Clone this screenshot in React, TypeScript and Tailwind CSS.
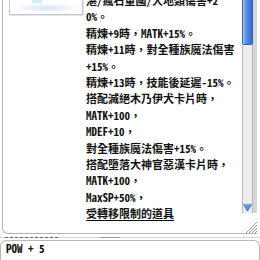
const lines: string[] = [
  "湛/瘋石量國/大地類傷害+2",
  "0%。",
  "精煉+9時，MATK+15%。",
  "精煉+11時，對全種族魔法傷害",
  "+15%。",
  "精煉+13時，技能後延遲-15%。",
  "搭配滅絕木乃伊犬卡片時，",
  "MATK+100，",
  "MDEF+10，",
  "對全種族魔法傷害+15%。",
  "搭配墮落大神官惡漢卡片時，",
  "MATK+100，",
  "MaxSP+50%，",
];

const font = {
  fontFamily: '"Noto Sans Mono CJK TC", "Noto Sans CJK TC", "Liberation Mono", monospace',
};

export default function App() {
  return (
    <div className="w-[260px] h-[260px] bg-white overflow-hidden text-[#111]" style={font}>
      <div className="h-[234px] flex ml-[2px] mr-[3px] border-l border-b border-[#b4b4b4] rounded-bl-[6px] overflow-hidden relative">
        <div className="w-[83px] shrink-0 pl-[6px]">
          <div className="w-[74px] h-[15px] border border-t-0 border-[#c2c6d2] bg-white relative overflow-hidden shadow-[1px_1px_0_#e6e6e6]">
            <div className="absolute left-[8px] right-[6px] top-[4px] h-[8px] bg-[radial-gradient(ellipse_at_center,#dde4fa_0%,#eef1fc_50%,transparent_75%)]" />
            <div className="absolute left-[22px] top-0 w-[10px] h-[3px] bg-[#cfeff5]" />
          </div>
        </div>
        <div className="flex-1 min-w-0 -mt-[8px] text-[11px] leading-[16.4px] font-bold whitespace-nowrap overflow-hidden">
          {lines.map((l, i) => (
            <div key={i}>{l}</div>
          ))}
          <div className="underline underline-offset-[2px]">受轉移限制的道具</div>
        </div>
        <div className="w-[15px] shrink-0 flex">
          <div className="w-[11px] flex flex-col">
            <div className="h-[45px] rounded-b-[2px] border border-t-0 border-[#2f62b8] bg-[linear-gradient(90deg,#a8c6f2_0%,#5b8fe0_35%,#3f76d2_80%,#3568c0_100%)]" />
            <div className="h-[158px] bg-[#ededed] border-x border-[#b8b8b8]" />
            <div className="h-[10px] flex items-start justify-center bg-[#ededed] border-x border-[#b8b8b8]">
              <svg width="10" height="9" viewBox="0 0 10 9">
                <polygon points="0.5,1 9.5,1 5,8.5" fill="#5f8fe0" stroke="#3d6cc4" strokeWidth="1" />
                <line x1="1" y1="1.5" x2="9" y2="1.5" stroke="#a9c4f0" strokeWidth="1" />
              </svg>
            </div>
            <div className="flex-1" />
          </div>
          <div className="w-[4px] h-[213px] bg-[#d6d6d6]" />
        </div>
        <svg className="absolute right-0 bottom-0" width="12" height="12" viewBox="0 0 12 12">
          <line x1="1" y1="12" x2="12" y2="1" stroke="#9a9a9a" strokeWidth="1" />
          <line x1="4" y1="12" x2="12" y2="4" stroke="#9a9a9a" strokeWidth="1" />
          <line x1="7" y1="12" x2="12" y2="7" stroke="#9a9a9a" strokeWidth="1" />
          <line x1="10" y1="12" x2="12" y2="10" stroke="#9a9a9a" strokeWidth="1" />
        </svg>
      </div>
      <div className="mt-[3px] h-[1px] bg-[#d4d4d4] relative">
        <div className="absolute left-[5px] w-[55px] h-[1px] bg-[repeating-linear-gradient(90deg,#6a6a6a_0_3px,transparent_3px_5px)]" />
        <div className="absolute left-[100px] w-[20px] h-[1px] bg-[#9a9a9a]" />
      </div>
      <div className="mt-[2px] h-[30px] border-t border-x border-[#b8b8b8] rounded-t-[6px] pl-[5px] text-[11px] leading-[14px] font-bold">
        POW + 5
      </div>
    </div>
  );
}
